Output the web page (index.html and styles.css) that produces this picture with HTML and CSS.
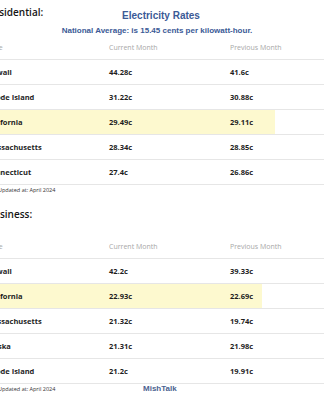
FILE: index.html
```html
<!DOCTYPE html>
<html>
<head>
<meta charset="utf-8">
<link rel="stylesheet" href="styles.css">
</head>
<body>
<div class="page">
  <section class="block">
    <div class="top">
      <h2 class="heading">Residential:</h2>
      <div class="title">
        <div class="t1">Electricity Rates</div>
        <div class="t2">National Average: is 15.45 cents per kilowatt-hour.</div>
      </div>
    </div>
    <table class="rates res">
      <tr class="head"><td>State</td><td>Current Month</td><td>Previous Month</td><td></td></tr>
      <tr><td>Hawaii</td><td>44.28c</td><td>41.6c</td><td></td></tr>
      <tr><td>Rhode Island</td><td>31.22c</td><td>30.88c</td><td></td></tr>
      <tr class="hl"><td>California</td><td>29.49c</td><td>29.11c</td><td></td></tr>
      <tr><td>Massachusetts</td><td>28.34c</td><td>28.85c</td><td></td></tr>
      <tr><td>Connecticut</td><td>27.4c</td><td>26.86c</td><td></td></tr>
    </table>
    <div class="foot"><span class="upd">Updated at: April 2024</span></div>
  </section>
  <section class="block">
    <div class="top short">
      <h2 class="heading">Business:</h2>
    </div>
    <table class="rates bus">
      <tr class="head"><td>State</td><td>Current Month</td><td>Previous Month</td><td></td></tr>
      <tr><td>Hawaii</td><td>42.2c</td><td>39.33c</td><td></td></tr>
      <tr class="hl"><td>California</td><td>22.93c</td><td>22.69c</td><td></td></tr>
      <tr><td>Massachusetts</td><td>21.32c</td><td>19.74c</td><td></td></tr>
      <tr><td>Alaska</td><td>21.31c</td><td>21.98c</td><td></td></tr>
      <tr><td>Rhode Island</td><td>21.2c</td><td>19.91c</td><td></td></tr>
    </table>
    <div class="foot"><span class="upd">Updated at: April 2024</span><span class="brand">MishTalk</span></div>
  </section>
</div>
</body>
</html>
```
FILE: styles.css
```css
html, body {
  margin: 0;
  padding: 0;
  background: #fff;
  overflow: hidden;
}
body {
  width: 324px;
  height: 400px;
}
.page {
  margin-left: -14px;
  width: 338px;
  font-family: "Open Sans", "DejaVu Sans", sans-serif;
  color: #1e1e1e;
}
.top {
  display: grid;
  height: 35px;
}
.top.short {
  height: 32px;
}
.heading {
  grid-area: 1 / 1;
  margin: 5px 0 0 1px;
  font-size: 10px;
  line-height: 14px;
  font-weight: 600;
  color: #151515;
}
.title {
  grid-area: 1 / 1;
  justify-self: center;
  margin: 9px 0 0 12px;
  text-align: center;
  font-family: "Liberation Sans", Arial, sans-serif;
  font-weight: 700;
  color: #3b5a96;
}
.t1 {
  font-size: 10px;
  line-height: 14px;
}
.t2 {
  font-size: 8px;
  line-height: 10px;
  margin-top: 3px;
  margin-left: -8px;
}
.rates {
  border-collapse: collapse;
  table-layout: fixed;
  width: 338px;
}
.rates td {
  padding: 0;
  height: 24px;
  border-bottom: 1px solid #e6e6e6;
  font-size: 7.5px;
  font-weight: 700;
  vertical-align: middle;
  white-space: nowrap;
}
.rates td:nth-child(1) { width: 123px; }
.rates td:nth-child(2) { width: 121px; }
.res td:nth-child(3) { width: 45px; }
.bus td:nth-child(3) { width: 32px; }
.rates .head td {
  font-weight: 400;
  color: #a8a8a8;
  font-size: 7px;
}
.rates .hl td {
  background: #fdf9cf;
}
.rates .hl td:last-child {
  background: transparent;
}
.foot {
  display: grid;
  height: 10px;
}
.upd {
  grid-area: 1 / 1;
  margin-left: 12px;
  font-size: 5.5px;
  line-height: 10px;
  color: #333;
}
.brand {
  grid-area: 1 / 1;
  justify-self: start;
  margin-left: 157px;
  font-family: "Liberation Sans", Arial, sans-serif;
  font-weight: 700;
  font-size: 8px;
  line-height: 10px;
  color: #4b6290;
}
.block + .block {
  margin-top: 7px;
}
```
